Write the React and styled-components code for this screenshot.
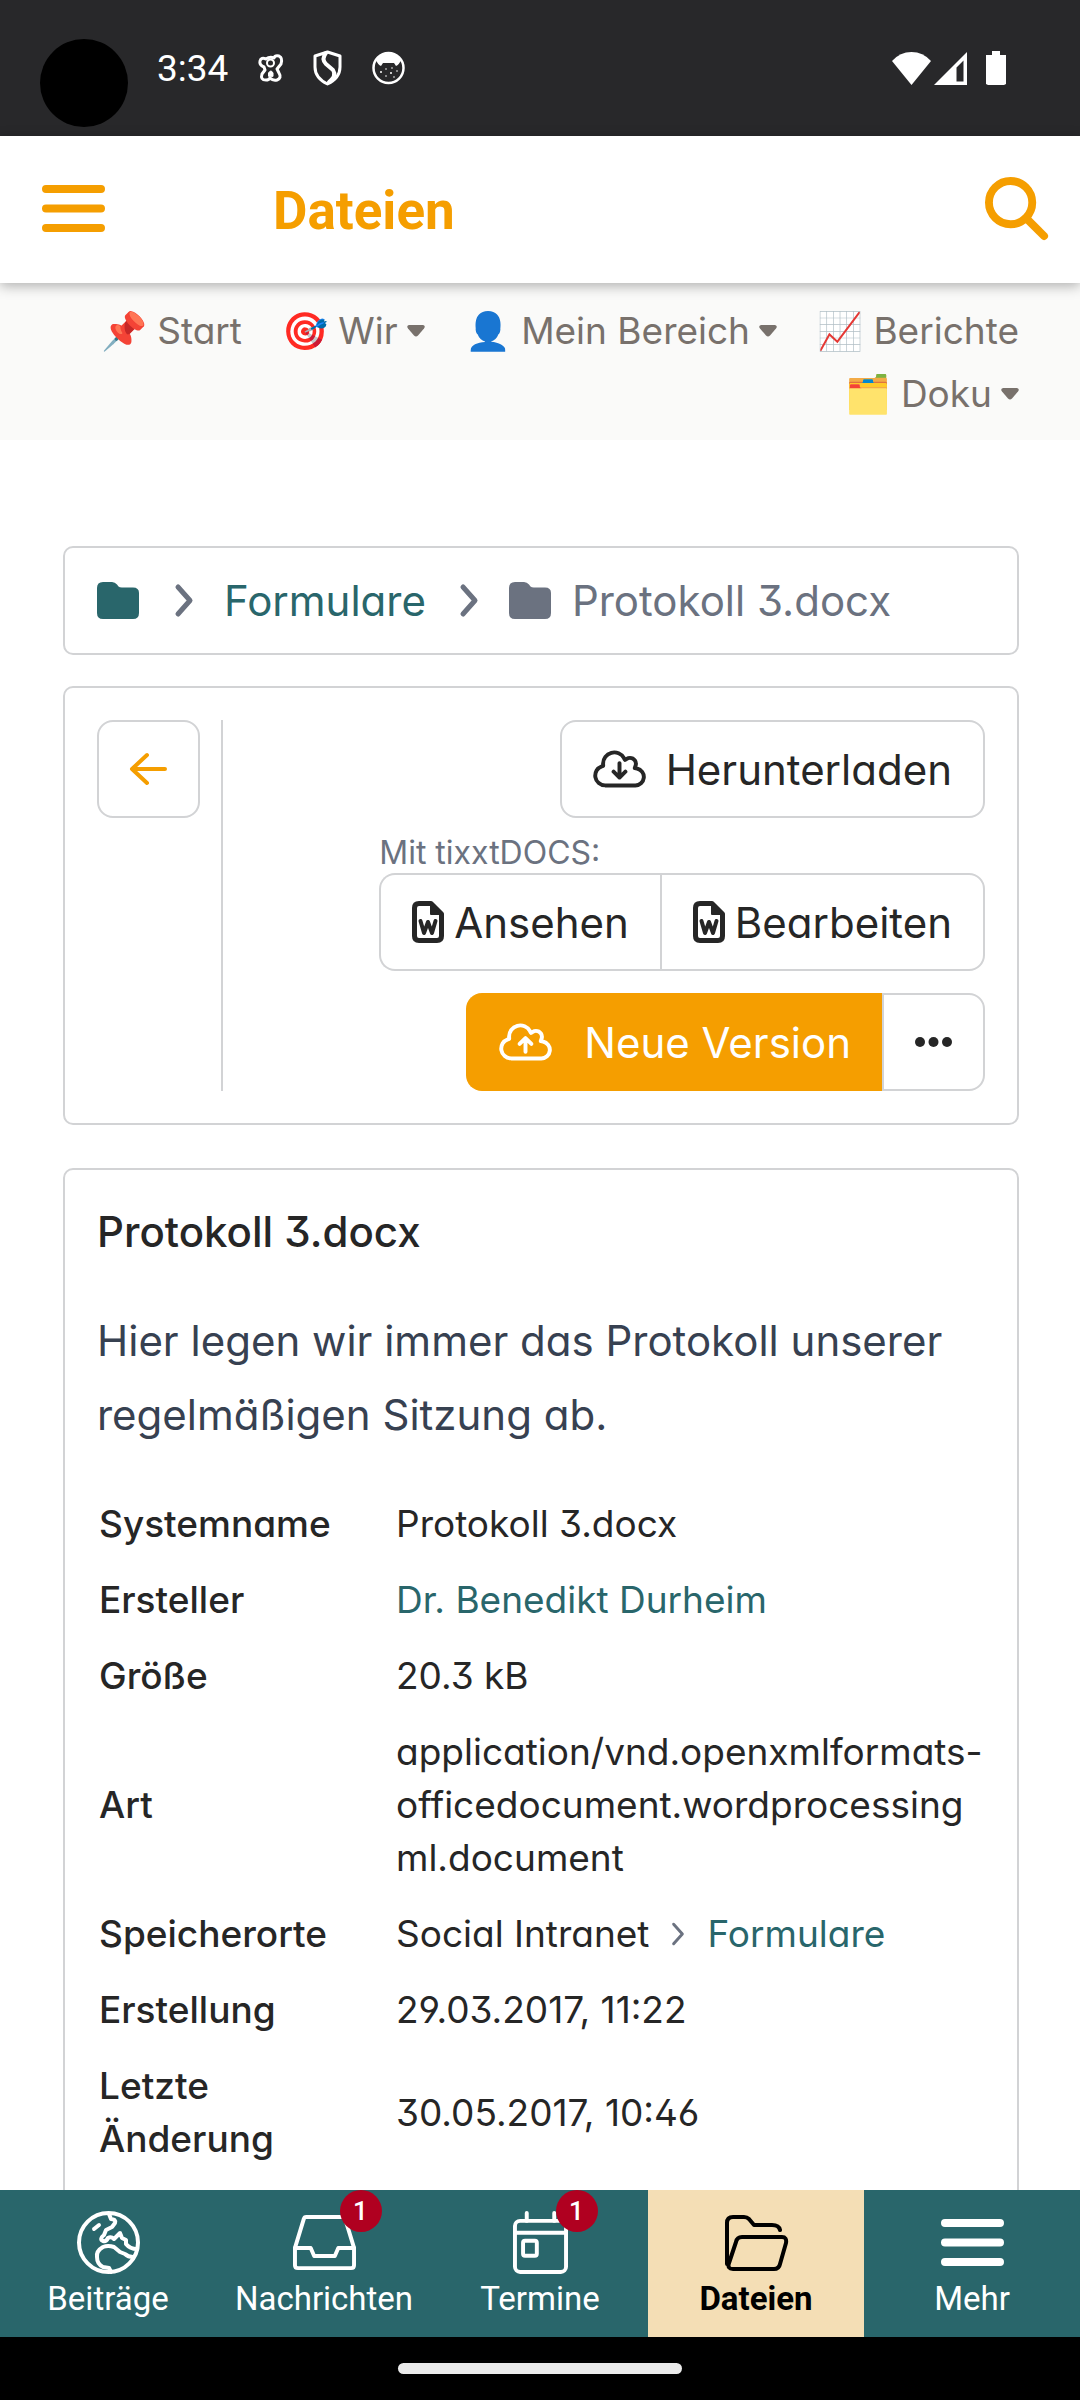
import React, { useState } from 'react'
import styled, { createGlobalStyle } from 'styled-components'


const GlobalStyle = createGlobalStyle`
  :root{
    --teal: #29666b;
    --orange: #f59e00;
    --ink: #262626;
    --muted: #6b7280;
    --line: #d2d3d5;
  }
  *{
    box-sizing: border-box;
  }
  body{
    margin: 0;
    background: #fff;
    color: var(--ink);
    font-family: Inter, "Noto Sans", sans-serif;
    font-feature-settings: "cv02", "cv03", "cv04", "cv09", "cv11";
  }
  a{
    color: var(--teal);
    text-decoration: none;
  }
  button{
    font: inherit;
    font-feature-settings: inherit;
    color: inherit;
    background: none;
    border: 0;
    padding: 0;
    cursor: pointer;
  }
  svg{
    display: block;
    flex: none;
    overflow: visible;
  }
`

const Screen = styled.div`
  display: flex;
  flex-direction: column;
  height: 100vh;
`

const StatusBar = styled.div`
  flex: none;
  display: flex;
  align-items: center;
  height: 136px;
  padding: 0 74px 0 40px;
  background: #28282a;
  color: #fff;
  font-family: Roboto, sans-serif;
  font-size: 37px;
`

const Camera = styled.span`
  width: 88px;
  height: 88px;
  margin: 30px 29px 0 0;
  border-radius: 50%;
  background: #000;
`

const Notifications = styled.div`
  display: flex;
  align-items: center;
  gap: 30px;
  margin-left: 30px;
`

const SystemIcons = styled.div`
  display: flex;
  align-items: center;
  gap: 3px;
  margin-left: auto;
  svg:last-child{
    margin-left: 16px;
  }
`

const AppHeader = styled.header`
  flex: none;
  position: relative;
  z-index: 1;
  display: flex;
  align-items: center;
  height: 147px;
  padding: 0 32px 2px 42px;
  background: #fff;
  color: var(--orange);
  box-shadow: 0 3px 12px rgba(0, 0, 0, .3);
  h1{
    flex: 1;
    margin: 0 0 0 168px;
    padding-top: 5px;
    font-family: Roboto, sans-serif;
    font-size: 53px;
    font-weight: 700;
  }
`

const Menu = styled.nav`
  flex: none;
  display: flex;
  flex-wrap: wrap;
  justify-content: flex-end;
  column-gap: 40px;
  padding: 16px 61px 15px;
  background: #fafaf9;
  font-size: 37px;
  line-height: 63px;
  a, button{
    display: flex;
    align-items: center;
    gap: 9px;
    color: #78716c;
  }
`

const Main = styled.main`
  flex: 1;
  min-height: 0;
  overflow: hidden;
  padding: 106px 61px 0 63px;
`

const Card = styled.section`
  padding: 32px;
  border: 2px solid var(--line);
  border-radius: 10px;
`

const Breadcrumb = styled(Card)`
  display: flex;
  align-items: center;
  height: 109px;
  margin-bottom: 31px;
  font-size: 42px;
  color: var(--muted);
  a{
    margin: 0 34px 0 31px;
  }
  a:first-child{
    margin: 0 36px 0 0;
  }
  span{
    margin-left: 21px;
  }
  svg + svg{
    margin-left: 31px;
  }
`

const Toolbar = styled(Card)`
  display: flex;
  margin-bottom: 43px;
`

const Divider = styled.div`
  width: 2px;
  margin-left: 21px;
  background: var(--line);
`

const Actions = styled.div`
  flex: 1;
  display: flex;
  flex-direction: column;
  align-items: flex-end;
  font-size: 42px;
  small{
    display: block;
    padding-top: 14px;
    font-size: 32px;
    line-height: 41px;
    color: var(--muted);
  }
`

const Button = styled.button`
  display: flex;
  align-items: center;
  justify-content: center;
  gap: ${props => props.$gap || '0'};
  height: 98px;
  padding: 0 31px;
  border: 2px solid ${props => props.$primary ? 'var(--orange)' : 'var(--line)'};
  border-radius: 16px;
  background: ${props => props.$primary ? 'var(--orange)' : '#fff'};
  color: ${props => props.$primary ? '#fff' : 'var(--ink)'};
`

const BackButton = styled(Button)`
  color: var(--orange);
`

const ButtonGroup = styled.div`
  display: flex;
  margin-bottom: ${props => props.$space || '0'};
  > :first-child{
    border-right: 0;
    border-radius: 16px 0 0 16px;
  }
  > :last-child{
    border-radius: 0 16px 16px 0;
  }
`

const Details = styled(Card)`
  padding-bottom: 96px;
  h2{
    margin: 0;
    font-size: 42px;
    font-weight: 500;
    line-height: 60px;
  }
  p{
    margin: 42px 0 33px;
    font-size: 42px;
    line-height: 74px;
    color: #374151;
  }
`

const Table = styled.table`
  width: 100%;
  table-layout: fixed;
  border-collapse: collapse;
  font-size: 37px;
  line-height: 53px;
  th, td{
    padding: 12px 2px 11px;
    text-align: left;
    font-weight: 400;
    overflow-wrap: anywhere;
  }
  th{
    width: 297px;
    padding-right: 60px;
    font-weight: 500;
  }
`

const Path = styled.span`
  display: flex;
  align-items: center;
  gap: 22px;
  svg{
    color: var(--muted);
  }
`

const TabBar = styled.nav`
  flex: none;
  display: grid;
  grid-template-columns: repeat(5, 1fr);
  height: 147px;
  background: var(--teal);
  font-family: Roboto, sans-serif;
`

const Tab = styled.a`
  display: flex;
  flex-direction: column;
  align-items: center;
  padding-top: 21px;
  font-size: 33px;
  line-height: 38px;
  font-weight: ${props => props.$active ? 700 : 400};
  color: ${props => props.$active ? '#000' : '#fff'};
  background: ${props => props.$active ? '#f4deb5' : 'transparent'};
`

const TabIcon = styled.span`
  position: relative;
  display: flex;
  align-items: center;
  justify-content: center;
  width: 63px;
  height: 63px;
  margin-bottom: 6px;
`

const Badge = styled.span`
  position: absolute;
  top: -21px;
  left: 47px;
  width: 42px;
  height: 42px;
  border-radius: 50%;
  background: #b00020;
  color: #fff;
  font-size: 26px;
  font-weight: 500;
  line-height: 42px;
  text-align: center;
`

const GestureBar = styled.div`
  flex: none;
  display: flex;
  justify-content: center;
  height: 63px;
  padding-top: 26px;
  background: #000;
  span{
    width: 284px;
    height: 11px;
    border-radius: 6px;
    background: #ebebeb;
  }
`

// shared wrapper for the line icons
const Line = ({ w, h, box, stroke, children }) => (
  <svg width={w} height={h} viewBox={box || `0 0 ${w} ${h}`} fill="none" stroke="currentColor"
    strokeWidth={stroke} strokeLinecap="round" strokeLinejoin="round" aria-hidden="true">
    {children}
  </svg>
)

const Bars = () => (
  <Line w={63} h={63} stroke={8}><path d="M4 12H59M4 31.5H59M4 51H59" /></Line>
)

const Search = () => (
  <Line w={63} h={63} box="0 0 512 512" stroke={64}>
    <circle cx="208" cy="208" r="176" />
    <path d="M334 334L480 480" />
  </Line>
)

const Chevron = ({ small }) => (
  <Line w={small ? 14 : 18} h={small ? 24 : 33} box="0 0 18 33" stroke={small ? 4 : 5}>
    <path d="M3 3L15 16.5L3 30" />
  </Line>
)

const Caret = () => (
  <svg width="18" height="12" viewBox="0 0 18 12" fill="currentColor" aria-hidden="true">
    <path d="M2 0H16Q19 1 17 3.500L11 10.500Q9 12.500 7 10.500L1 3.500Q-1 1 2 0Z" />
  </svg>
)

const Folder = () => (
  <svg width="42" height="37" viewBox="0 0 42 37" fill="currentColor" aria-hidden="true">
    <path d="M6 0H15Q18 0 20 2.500L21.500 4.500Q22.500 5.500 25 5.500H36Q42 5.500 42 11V31Q42 37 36 37H6Q0 37 0 31V6Q0 0 6 0Z" />
  </svg>
)

const Cloud = ({ up }) => (
  <Line w={53} h={42} box="0 0 640 512" stroke={48}>
    <path d="M144 456H512A104 104 0 0 0 533 250L506 245L515 218A72 72 0 0 0 448 120C433 120 419 124.500 408 132L388 146L375 124A136 136 0 0 0 120 192L121 217L104 223A120 120 0 0 0 144 456Z" />
    {up ? <path d="M320 376V214M248 280L320 208L392 280" /> : <path d="M320 184V352M248 288L320 360L392 288" />}
  </Line>
)

const WordFile = () => (
  <Line w={32} h={42} stroke={5}>
    <path d="M7 2.500H19L29.500 13V35Q29.500 39.500 25 39.500H7Q2.500 39.500 2.500 35V7Q2.500 2.500 7 2.500Z" />
    <path d="M19 3V13H29Z" fill="currentColor" strokeWidth="2" />
    <path d="M8.500 20L12 32L16 21L20 32L23.500 20" strokeWidth="4" />
  </Line>
)

const ArrowLeft = () => (
  <Line w={37} h={32} stroke={4}><path d="M35 16H2M17 2L2 16L17 30" /></Line>
)

const Dots = () => (
  <svg width="37" height="10" viewBox="0 0 37 10" fill="currentColor" aria-hidden="true">
    <circle cx="5" cy="5" r="5" /><circle cx="18.500" cy="5" r="5" /><circle cx="32" cy="5" r="5" />
  </svg>
)

const Earth = () => (
  <Line w={63} h={63} stroke={4}>
    <circle cx="31.500" cy="31.500" r="29.500" />
    <path d="M32 3L34 8Q39 8 38 12L35 16L29 19L27 24Q22 28 26 30Q29 31 31 27Q34 25 37 28L43 22L45 27L49 29V33Q53 38 60 38" />
    <path d="M17 18L22 14" />
    <path d="M56 46Q51 46 48 43L43 41L37 36Q31 34 26 36Q19 40 20 46Q20 53 26 56L32 57L34 61" />
  </Line>
)

const Inbox = () => (
  <Line w={63} h={63} box="0 0 512 512" stroke={32}>
    <path d="M108 48H404Q420 48 424 64L496 300V440Q496 464 472 464H40Q16 464 16 440V300L88 64Q92 48 108 48Z" />
    <path d="M16 300H144L172 366H340L368 300H496" />
  </Line>
)

const Calendar = () => (
  <Line w={55} h={63} box="0 0 448 512" stroke={32}>
    <rect x="16" y="80" width="416" height="416" rx="42" />
    <rect x="82" y="242" width="112" height="122" rx="16" />
    <path d="M16 176H432M112 16V80M336 16V80" />
  </Line>
)

const FolderOpen = () => (
  <Line w={63} h={56} stroke={4}>
    <path d="M2 49V8Q2 2 8 2H19Q22 2 24 4L29 10H47Q54 10 55 15" />
    <path d="M17 22H57Q62 22 61 28L55 49Q54 54 49 54H8Q2 54 4 48L11 27Q12 22 17 22Z" />
  </Line>
)

const Bear = () => (
  <Line w={25} h={28} stroke={3}>
    <path d="M8 5Q3 3 2 7Q1 11 6 13L7 16L4 20Q2 26 8 26Q11 26 12 24Q15 27 19 26Q24 24 21 19L19 15L23 10Q25 4 21 2Q17 1 16 4Q12 2 8 5Z" />
    <circle cx="12.500" cy="9" r="3.500" strokeWidth="2" />
    <path d="M10.500 22V19Q13 15 15 19V22Z" fill="currentColor" strokeWidth="1" />
  </Line>
)

const Shield = () => (
  <Line w={29} h={36} stroke={3}>
    <path d="M14.500 2L27 6V17Q27 28 14.500 34Q2 28 2 17V6Z" />
    <path d="M13 3Q8 9 13 14L20 20Q24 26 16 32" strokeWidth="4" />
  </Line>
)

const CatBadge = () => (
  <svg width="33" height="34" viewBox="0 0 33 34" aria-hidden="true">
    <circle cx="16.500" cy="17" r="15" fill="none" stroke="#fff" strokeWidth="2.500" />
    <path d="M4 9Q9 2 16.500 2T29 9Q27 14 24 15L22 12H11L9 15Q6 14 4 9Z" fill="#fff" />
    <g fill="#fff">
      <circle cx="9" cy="21" r="1" /><circle cx="14" cy="18" r=".8" /><circle cx="20" cy="17" r=".8" />
      <circle cx="19" cy="22" r="1" /><circle cx="25" cy="20" r=".8" /><circle cx="14" cy="25" r=".8" />
      <circle cx="22" cy="26" r=".8" />
    </g>
  </svg>
)

const Wifi = () => (
  <svg width="39" height="33" viewBox="0 0 39 33" fill="currentColor" aria-hidden="true">
    <path d="M0 9Q8 0 19.500 0T39 9L19.500 33Z" />
  </svg>
)

const Signal = () => (
  <svg width="33" height="33" viewBox="0 0 33 33" fill="currentColor" aria-hidden="true">
    <path fillRule="evenodd" d="M33 0V33H0ZM29.500 8.500L22.500 15.500V29.500H29.500Z" />
  </svg>
)

const Battery = () => (
  <svg width="20" height="34" viewBox="0 0 20 34" fill="currentColor" aria-hidden="true">
    <path d="M6 0H14V4H20V33L18 34H2L0 33V4H6Z" />
  </svg>
)

const menu = [
  { icon: '📌', label: 'Start' },
  { icon: '🎯', label: 'Wir', sub: true },
  { icon: '👤', label: 'Mein Bereich', sub: true },
  { icon: '📈', label: 'Berichte' },
  { icon: '🗂️', label: 'Doku', sub: true },
]

const rows = [
  ['Systemname', 'Protokoll 3.docx'],
  ['Ersteller', <a href="#durheim">Dr. Benedikt Durheim</a>],
  ['Größe', '20.3 kB'],
  ['Art', 'application/vnd.openxmlformats-officedocument.wordprocessingml.document'],
  ['Speicherorte', <Path>Social Intranet <Chevron small /> <a href="#formulare">Formulare</a></Path>],
  ['Erstellung', '29.03.2017, 11:22'],
  ['Letzte Änderung', '30.05.2017, 10:46'],
]

const tabs = [
  { label: 'Beiträge', icon: <Earth /> },
  { label: 'Nachrichten', icon: <Inbox />, count: 1 },
  { label: 'Termine', icon: <Calendar />, count: 1 },
  { label: 'Dateien', icon: <FolderOpen /> },
  { label: 'Mehr', icon: <Bars /> },
]


export default function App() {

  const [active, setActive] = useState('Dateien')

  return (
    <Screen>
      <GlobalStyle />
      <StatusBar>
        <Camera />
        <span>3:34</span>
        <Notifications><Bear /><Shield /><CatBadge /></Notifications>
        <SystemIcons><Wifi /><Signal /><Battery /></SystemIcons>
      </StatusBar>
      <AppHeader>
        <button aria-label="Menü"><Bars /></button>
        <h1>Dateien</h1>
        <button aria-label="Suche"><Search /></button>
      </AppHeader>
      <Menu>
        {menu.map(item => item.sub
          ? <button key={item.label}><span>{item.icon} {item.label}</span><Caret /></button>
          : <a key={item.label} href="#menu"><span>{item.icon} {item.label}</span></a>
        )}
      </Menu>
      <Main>
        <Breadcrumb as="nav">
          <a href="#root" aria-label="Dateien"><Folder /></a>
          <Chevron />
          <a href="#formulare">Formulare</a>
          <Chevron />
          <Folder />
          <span>Protokoll 3.docx</span>
        </Breadcrumb>
        <Toolbar>
          <div>
            <BackButton aria-label="Zurück"><ArrowLeft /></BackButton>
          </div>
          <Divider />
          <Actions>
            <Button $gap="20px"><Cloud />Herunterladen</Button>
            <div>
              <small>Mit tixxtDOCS:</small>
              <ButtonGroup $space="22px">
                <Button $gap="10px"><WordFile />Ansehen</Button>
                <Button $gap="10px"><WordFile />Bearbeiten</Button>
              </ButtonGroup>
            </div>
            <ButtonGroup>
              <Button $primary $gap="32px"><Cloud up />Neue Version</Button>
              <Button aria-label="Mehr"><Dots /></Button>
            </ButtonGroup>
          </Actions>
        </Toolbar>
        <Details>
          <h2>Protokoll 3.docx</h2>
          <p>Hier legen wir immer das Protokoll unserer regelmäßigen Sitzung ab.</p>
          <Table>
            <tbody>
              {rows.map(([name, value]) => (
                <tr key={name}>
                  <th scope="row">{name}</th>
                  <td>{value}</td>
                </tr>
              ))}
            </tbody>
          </Table>
        </Details>
      </Main>
      <TabBar>
        {tabs.map(tab => (
          <Tab key={tab.label} href="#tab" $active={tab.label === active} onClick={() => setActive(tab.label)}>
            <TabIcon>
              {tab.icon}
              {tab.count && <Badge>{tab.count}</Badge>}
            </TabIcon>
            {tab.label}
          </Tab>
        ))}
      </TabBar>
      <GestureBar><span /></GestureBar>
    </Screen>
  )
}
